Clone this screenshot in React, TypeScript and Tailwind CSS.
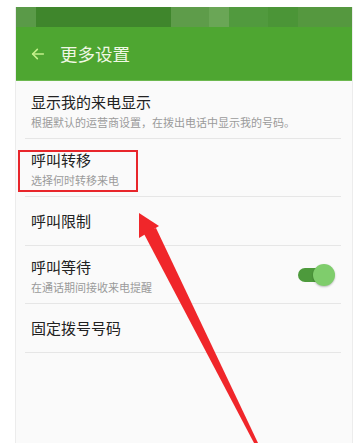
import React from "react";

const font = { fontFamily: '"Noto Sans CJK SC", "Noto Sans", sans-serif' };

function Divider() {
  return <div className="ml-[9px] mr-[11px] h-px bg-[#e6e6e6]" />;
}

function TwoLine({ title, sub, right }: { title: string; sub: string; right?: React.ReactNode }) {
  return (
    <div className="flex h-[57px] items-start justify-between pl-[15px] pr-[17px]">
      <div className="flex flex-col pt-[11px]">
        <div className="text-[15px] leading-[20px] text-[#222]">{title}</div>
        <div className="mt-[2px] text-[11px] leading-[16px] text-[#9a9a9a]">{sub}</div>
      </div>
      {right}
    </div>
  );
}

function OneLine({ title }: { title: string }) {
  return (
    <div className="flex h-[48px] items-center pl-[15px]">
      <div className="text-[15px] leading-[20px] text-[#222]">{title}</div>
    </div>
  );
}

export default function App() {
  return (
    <div className="relative h-[443px] w-[363px] overflow-hidden bg-white" style={font}>
      <div className="ml-[15px] mt-[7px] h-[436px] w-[338px] border-x border-[#ececec] bg-[#fafafa]">
        {/* status bar (blurred) */}
        <div className="flex h-[20px]">
          <div className="w-[20px] bg-[#5a9a48]" />
          <div className="w-[135px] bg-[#3f862c]" />
          <div className="w-[38px] bg-[#5e9c4a]" />
          <div className="w-[20px] bg-[#6aa656]" />
          <div className="w-[39px] bg-[#519a3e]" />
          <div className="w-[30px] bg-[#4b9537]" />
          <div className="flex-1 bg-[#55983f]" />
        </div>
        {/* app bar */}
        <div className="flex h-[54px] items-center border-b border-[#6cb84f] bg-[#4ea631]">
          <svg width="16" height="16" viewBox="0 0 24 24" className="ml-[14px]" fill="none" stroke="#c4f08a" strokeWidth="2.4" strokeLinecap="round" strokeLinejoin="round">
            <path d="M20 12H4" />
            <path d="M11 5l-7 7 7 7" />
          </svg>
          <div className="ml-[14px] text-[17.5px] leading-[24px] text-[#f0f8e4]">更多设置</div>
        </div>
        <TwoLine title="显示我的来电显示" sub="根据默认的运营商设置，在拨出电话中显示我的号码。" />
        <Divider />
        <TwoLine title="呼叫转移" sub="选择何时转移来电" />
        <Divider />
        <OneLine title="呼叫限制" />
        <Divider />
        <TwoLine
          title="呼叫等待"
          sub="在通话期间接收来电提醒"
          right={
            <div className="relative mt-[18px] h-[22px] w-[37px]">
              <div className="absolute left-0 top-[4px] h-[14px] w-[26px] rounded-full bg-[#4d9a3c]" />
              <div className="absolute right-0 top-0 h-[22px] w-[22px] rounded-full bg-[#7fcd6c] shadow-[0_1px_2px_rgba(0,0,0,0.25)]" />
            </div>
          }
        />
        <Divider />
        <OneLine title="固定拨号号码" />
        <Divider />
      </div>
      {/* red highlight box */}
      <div className="absolute left-[18px] top-[150px] h-[42px] w-[120px] border-2 border-[#e8262b]" />
      {/* red arrow */}
      <svg className="absolute left-0 top-0" width="363" height="443" viewBox="0 0 363 443">
        <polygon points="139,213 139,238 159,226" fill="#f0262a" />
        <polygon points="143,232 156,228 258,443 254,443" fill="#f0262a" />
      </svg>
    </div>
  );
}
